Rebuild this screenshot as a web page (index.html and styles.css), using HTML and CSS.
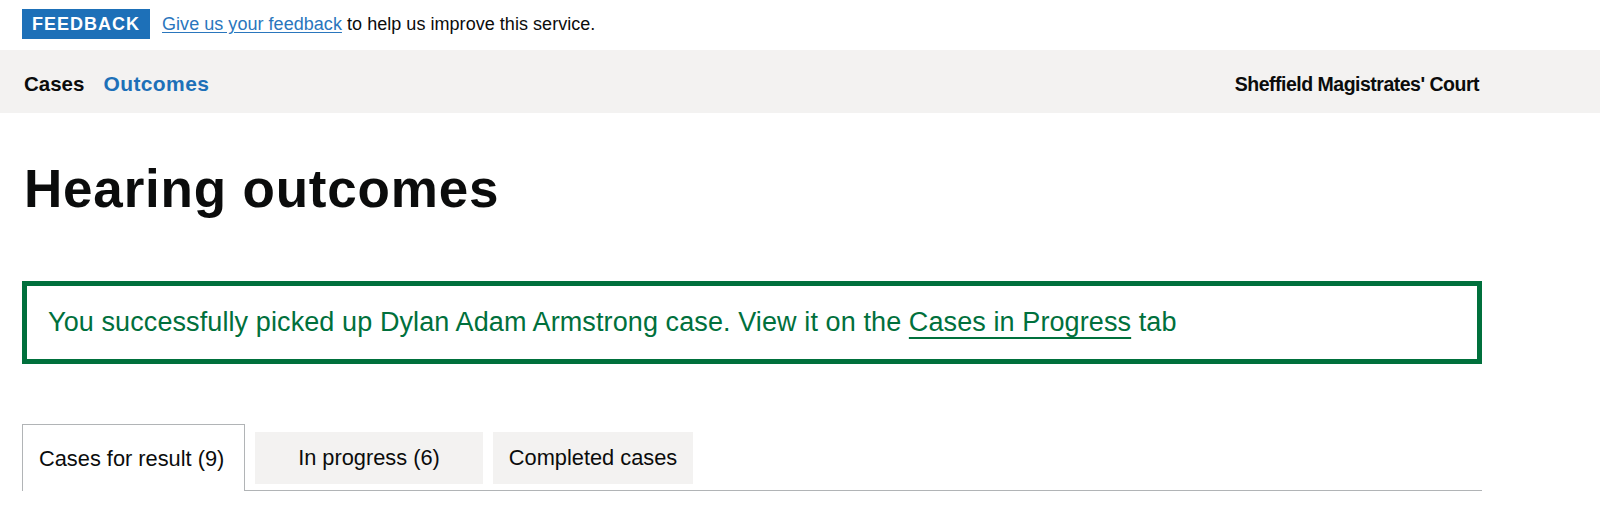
FILE: index.html
```html
<!DOCTYPE html>
<html lang="en">
<head>
<meta charset="utf-8">
<title>Hearing outcomes</title>
<link rel="stylesheet" href="styles.css">
</head>
<body>
<div class="feedback-bar">
  <div class="container feedback-inner">
    <strong class="tag">FEEDBACK</strong>
    <span class="feedback-text"><a href="#" class="feedback-link">Give us your feedback</a> to help us improve this service.</span>
  </div>
</div>
<header class="nav-bar">
  <div class="container nav-inner">
    <nav class="nav-links">
      <a href="#" class="nav-link nav-link--current">Cases</a>
      <a href="#" class="nav-link">Outcomes</a>
    </nav>
    <span class="court">Sheffield Magistrates' Court</span>
  </div>
</header>
<main class="container main">
  <h1 class="heading">Hearing outcomes</h1>
  <div class="notification">You successfully picked up Dylan Adam Armstrong case. View it on the <a href="#" class="notification-link">Cases in Progress</a> tab</div>
  <div class="tabs">
    <ul class="tabs-list">
      <li class="tab tab--selected">Cases for result (9)</li>
      <li class="tab tab--progress">In progress (6)</li>
      <li class="tab tab--completed">Completed cases</li>
    </ul>
  </div>
</main>
</body>
</html>
```
FILE: styles.css
```css
* { box-sizing: border-box; }

html, body {
  margin: 0;
  padding: 0;
  background: #ffffff;
}

body {
  font-family: "Liberation Sans", Arial, sans-serif;
  color: #0b0c0c;
}

.container {
  width: 1460px;
  margin-left: 22px;
}

/* Feedback banner */
.feedback-bar {
  padding: 9px 0 11px;
}

.feedback-inner {
  display: flex;
  align-items: center;
  gap: 12px;
}

.tag {
  display: inline-block;
  height: 30px;
  line-height: 30px;
  padding: 0 10px 0 10px;
  background: #1d70b8;
  color: #ffffff;
  font-size: 18px;
  font-weight: 700;
  letter-spacing: 1px;
}

.feedback-text {
  font-size: 18px;
  line-height: 30px;
  letter-spacing: 0.04px;
}

.feedback-link {
  color: #2a76bd;
  text-decoration: underline;
  text-underline-offset: 2px;
}

/* Navigation bar */
.nav-bar {
  background: #f3f2f1;
  padding: 21px 0 16px;
}

.nav-inner {
  display: flex;
  justify-content: space-between;
  align-items: baseline;
}

.nav-links {
  display: flex;
  gap: 19px;
  padding-left: 2px;
}

.nav-link {
  font-size: 21px;
  line-height: 25px;
  font-weight: 700;
  color: #1d70b8;
  text-decoration: none;
}

.nav-link--current {
  color: #0b0c0c;
  font-size: 20.5px;
}

.nav-link + .nav-link {
  letter-spacing: 0.4px;
}

.court {
  font-size: 19.5px;
  line-height: 25px;
  font-weight: 700;
  letter-spacing: -0.5px;
  margin-right: 3px;
}

/* Main */
.main {
  padding-top: 47px;
}

.heading {
  margin: 0 0 63px;
  padding-left: 2px;
  font-size: 53px;
  line-height: 58px;
  font-weight: 700;
  letter-spacing: 0.8px;
}

.notification {
  border: 5px solid #00703c;
  padding: 20px 21px;
  font-size: 27px;
  line-height: 33px;
  letter-spacing: 0.1px;
  color: #00703c;
}

.notification-link {
  color: #00703c;
  text-decoration: underline;
  text-decoration-thickness: 2px;
  text-underline-offset: 6px;
}

/* Tabs */
.tabs {
  margin-top: 60px;
}

.tabs-list {
  display: flex;
  align-items: flex-end;
  gap: 10px;
  margin: 0;
  padding: 0;
  list-style: none;
  border-bottom: 1px solid #b1b4b6;
}

.tab {
  font-size: 21.8px;
  line-height: 26px;
  padding: 13px 15px;
  margin-bottom: 6px;
  background: #f3f2f1;
  text-align: center;
  white-space: nowrap;
}

.tab--selected {
  width: 223px;
  margin-bottom: -1px;
  padding: 21px 17px 19px 16px;
  background: #ffffff;
  border: 1px solid #b1b4b6;
  border-bottom: 0;
  text-align: left;
}

.tab--progress {
  width: 228px;
}

.tab--completed {
  width: 200px;
}
```
